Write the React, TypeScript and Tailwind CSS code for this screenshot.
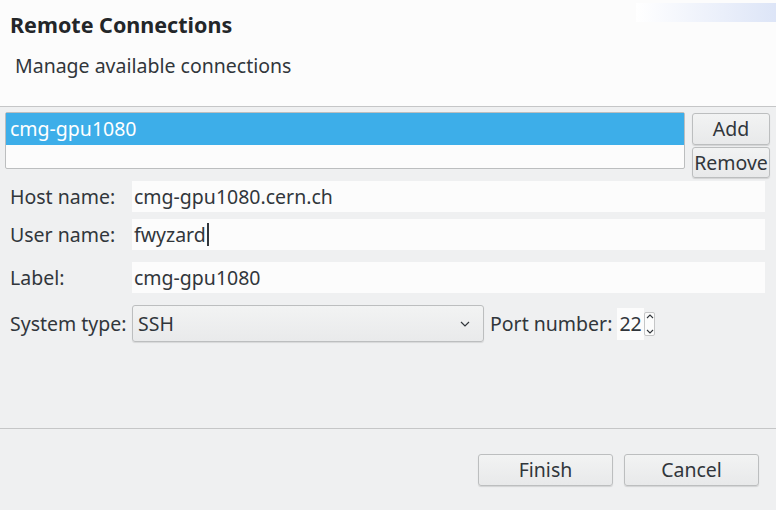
import React from "react";

const font = { fontFamily: '"Noto Sans", "Open Sans", sans-serif' };

function Field({ label, value, caret, top }: { label: string; value: string; caret?: boolean; top: string }) {
  return (
    <div className={`flex items-center ${top}`}>
      <div className="w-[127px] pl-[5px] text-[19.5px] text-[#31363b]">{label}</div>
      <div className="relative flex h-[31px] w-[633px] items-center bg-[#fcfcfc] pl-[2px] text-[19.5px] text-[#31363b]">
        <span>{value}</span>
        {caret && <span className="ml-[1px] inline-block h-[23px] w-[2px] bg-[#31363b]" />}
      </div>
    </div>
  );
}

function Btn({ children, className }: { children: React.ReactNode; className: string }) {
  return (
    <button
      type="button"
      className={`flex items-center justify-center rounded-[3px] border border-[#bcbebf] bg-gradient-to-b from-[#f2f3f3] to-[#e8e9ea] text-[19.5px] text-[#31363b] shadow-[0_1px_1px_rgba(0,0,0,0.12)] ${className}`}
    >
      {children}
    </button>
  );
}

export default function App() {
  return (
    <div className="h-[510px] w-[776px] overflow-hidden bg-[#eff0f1]" style={font}>
      {/* banner */}
      <div className="relative h-[107px] border-b border-[#c5c6c7] bg-[#fcfcfc]">
        <div className="absolute right-0 top-[3px] h-[19px] w-[140px] bg-gradient-to-r from-white via-[#eef2fb] to-[#dde5f7]" />
        <div className="pl-[10px] pt-[11px] text-[21.5px] font-bold leading-[28px] text-[#232629]">Remote Connections</div>
        <div className="pl-[15px] pt-[13px] text-[19.5px] leading-[28px] text-[#31363b]">Manage available connections</div>
      </div>

      {/* list and side buttons */}
      <div className="flex gap-[7px] pl-[5px] pt-[5px]">
        <div className="h-[57px] w-[680px] rounded-[2px] border border-[#bcbebf] bg-[#fcfcfc]">
          <div className="flex h-[32px] items-center bg-[#3daee9] pl-[4px] text-[19.5px] text-white">cmg-gpu1080</div>
        </div>
        <div className="flex flex-col gap-[2px] pt-[1px]">
          <Btn className="h-[32px] w-[78px]">Add</Btn>
          <Btn className="h-[31px] w-[78px]">Remove</Btn>
        </div>
      </div>

      <div className="pl-[5px]">
        <Field top="mt-[3px]" label="Host name:" value="cmg-gpu1080.cern.ch" />
        <Field top="mt-[7px]" label="User name:" value="fwyzard" caret />
        <Field top="mt-[12px]" label="Label:" value="cmg-gpu1080" />

        <div className="mt-[12px] flex items-center">
          <div className="w-[127px] pl-[5px] text-[19.5px] text-[#31363b]">System type:</div>
          <div className="flex h-[37px] w-[352px] items-center justify-between rounded-[3px] border border-[#bcbebf] bg-gradient-to-b from-[#f2f3f3] to-[#e9eaeb] pl-[5px] pr-[13px] text-[19.5px] text-[#31363b] shadow-[0_1px_1px_rgba(0,0,0,0.1)]">
            <span>SSH</span>
            <svg width="10" height="6" viewBox="0 0 10 6" fill="none" stroke="#31363b" strokeWidth="1.2">
              <path d="M1 1l4 4 4-4" />
            </svg>
          </div>
          <div className="ml-[6px] text-[19.5px] text-[#31363b]">Port number:</div>
          <div className="ml-[5px] flex h-[32px] items-center">
            <div className="flex h-[32px] w-[27px] items-center bg-[#fcfcfc] pl-[2px] text-[19.5px] text-[#31363b]">22</div>
            <div className="flex h-[24px] w-[11px] flex-col items-center justify-between rounded-[2px] border border-[#c5c6c7] bg-[#fcfcfc] py-[1px]">
              <svg width="8" height="5" viewBox="0 0 8 5" fill="none" stroke="#31363b" strokeWidth="1.1">
                <path d="M1 4l3-3 3 3" />
              </svg>
              <svg width="8" height="5" viewBox="0 0 8 5" fill="none" stroke="#31363b" strokeWidth="1.1">
                <path d="M1 1l3 3 3-3" />
              </svg>
            </div>
          </div>
        </div>
      </div>

      <div className="mt-[86px] h-px bg-[#c5c6c7]" />

      <div className="flex justify-end gap-[11px] pr-[17px] pt-[25px]">
        <Btn className="h-[32px] w-[135px]">Finish</Btn>
        <Btn className="h-[32px] w-[135px]">Cancel</Btn>
      </div>
    </div>
  );
}
